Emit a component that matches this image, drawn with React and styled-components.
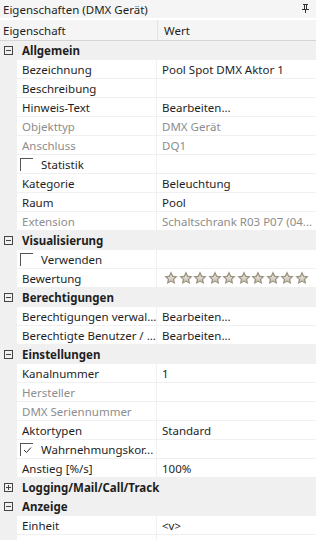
import React from "react";
import styled, { createGlobalStyle } from "styled-components";

const GlobalStyle = createGlobalStyle`
  html, body {
    margin: 0;
    padding: 0;
    background: #f0f0f0;
  }
  body {
    font-family: "Noto Sans", "Open Sans", sans-serif;
    font-size: 11.5px;
    color: #1e1e1e;
  }
`;

const sections = [
  {
    title: "Allgemein",
    open: true,
    rows: [
      { name: "Bezeichnung", value: "Pool Spot DMX Aktor 1" },
      { name: "Beschreibung", value: "" },
      { name: "Hinweis-Text", value: "Bearbeiten..." },
      { name: "Objekttyp", value: "DMX Gerät", disabled: true },
      { name: "Anschluss", value: "DQ1", disabled: true },
      { name: "Statistik", check: false },
      { name: "Kategorie", value: "Beleuchtung" },
      { name: "Raum", value: "Pool" },
      { name: "Extension", value: "Schaltschrank R03 P07 (04...", disabled: true },
    ],
  },
  {
    title: "Visualisierung",
    open: true,
    rows: [
      { name: "Verwenden", check: false },
      { name: "Bewertung", stars: 10 },
    ],
  },
  {
    title: "Berechtigungen",
    open: true,
    rows: [
      { name: "Berechtigungen verwal...", value: "Bearbeiten..." },
      { name: "Berechtigte Benutzer / ...", value: "Bearbeiten..." },
    ],
  },
  {
    title: "Einstellungen",
    open: true,
    rows: [
      { name: "Kanalnummer", value: "1" },
      { name: "Hersteller", value: "", disabled: true },
      { name: "DMX Seriennummer", value: "", disabled: true },
      { name: "Aktortypen", value: "Standard" },
      { name: "Wahrnehmungskor...", check: true },
      { name: "Anstieg [%/s]", value: "100%" },
    ],
  },
  { title: "Logging/Mail/Call/Track", open: false, rows: [] },
  {
    title: "Anzeige",
    open: true,
    rows: [
      { name: "Einheit", value: "<v>" },
      { name: "", value: "" },
    ],
  },
];

const PinIcon = () => (
  <svg width="9" height="9" viewBox="0 0 9 9">
    <g fill="#333">
      <rect x="2" y="0" width="5" height="1" />
      <rect x="3" y="1" width="1" height="4" />
      <rect x="5" y="1" width="1" height="4" />
      <rect x="1" y="5" width="7" height="1" />
      <rect x="4" y="6" width="1" height="3" />
    </g>
  </svg>
);

const Star = ({ id }) => (
  <svg width="14" height="14" viewBox="1 1 22 22">
    <defs>
      <linearGradient id={id} x1="0" y1="0" x2="0" y2="1">
        <stop offset="0" stopColor="#eeeae0" />
        <stop offset="1" stopColor="#c4bfb0" />
      </linearGradient>
    </defs>
    <path
      d="M12 1.5l3.2 6.9 7.3.8-5.5 5 1.6 7.4L12 17.8l-6.6 3.8L7 14.2l-5.5-5 7.3-.8z"
      fill="#9a9381"
    />
    <path
      d="M12 6.6l1.9 3.9 4.2.5-3.1 2.9.8 4.2-3.8-2.1-3.8 2.1.8-4.2-3.1-2.9 4.2-.5z"
      fill={`url(#${id})`}
    />
  </svg>
);

const CheckMark = () => (
  <svg width="9" height="8" viewBox="0 0 9 8">
    <path d="M1 4l2.5 2.5L8 1.5" fill="none" stroke="#333" strokeWidth="1" />
  </svg>
);

export default function App() {
  return (
    <>
      <GlobalStyle />
      <Panel>
        <TitleBar>
          <span>Eigenschaften (DMX Gerät)</span>
          <PinIcon />
        </TitleBar>
        <Header>
          <HeadCell>Eigenschaft</HeadCell>
          <HeadCell $last>Wert</HeadCell>
        </Header>
        {sections.map((s) => (
          <React.Fragment key={s.title}>
            <CategoryRow>
              <Gutter>
                <Toggle>
                  <ToggleBar />
                  {!s.open && <ToggleBar $vertical />}
                </Toggle>
              </Gutter>
              <CategoryLabel>{s.title}</CategoryLabel>
            </CategoryRow>
            {s.rows.map((r, i) => (
              <Row key={s.title + i}>
                <Gutter />
                <NameCell $disabled={r.disabled}>
                  {r.check !== undefined && (
                    <CheckBox>{r.check && <CheckMark />}</CheckBox>
                  )}
                  <CellText>{r.name}</CellText>
                </NameCell>
                <ValueCell $disabled={r.disabled}>
                  {r.stars ? (
                    <Stars>
                      {Array.from({ length: r.stars }).map((_, k) => (
                        <Star key={k} id={`st${k}`} />
                      ))}
                    </Stars>
                  ) : (
                    <CellText>{r.value}</CellText>
                  )}
                </ValueCell>
              </Row>
            ))}
          </React.Fragment>
        ))}
      </Panel>
    </>
  );
}

const Panel = styled.div`
  width: 316px;
  height: 540px;
  overflow: hidden;
  background: #f0f0f0;
  display: flex;
  flex-direction: column;
`;

const TitleBar = styled.div`
  height: 19px;
  flex: none;
  display: flex;
  align-items: center;
  justify-content: space-between;
  padding: 1px 6px 0 3px;
  box-sizing: border-box;
  background: #f5f5f5;
  border-bottom: 1px solid #ffffff;
  color: #1e1e1e;
  svg {
    margin-top: -2px;
  }
`;

const Header = styled.div`
  height: 22px;
  flex: none;
  display: grid;
  grid-template-columns: 157px 1fr;
  background: #f5f5f5;
  border-top: 1px solid #ffffff;
  border-bottom: 1px solid #d5d5d5;
  box-sizing: border-box;
`;

const HeadCell = styled.div`
  display: flex;
  align-items: center;
  padding-left: ${(p) => (p.$last ? "6px" : "3px")};
  border-left: ${(p) => (p.$last ? "1px solid #e3e3e3" : "none")};
  color: #1e1e1e;
`;

const CategoryRow = styled.div`
  height: 19px;
  flex: none;
  display: flex;
  align-items: center;
  background: #f0f0f0;
`;

const Gutter = styled.div`
  width: 17px;
  height: 100%;
  flex: none;
  display: flex;
  align-items: center;
  background: #f0f0f0;
`;

const Toggle = styled.div`
  position: relative;
  width: 9px;
  height: 9px;
  margin-left: 4px;
  box-sizing: border-box;
  border: 1px solid #444;
`;

const ToggleBar = styled.div`
  position: absolute;
  background: #444;
  ${(p) =>
    p.$vertical
      ? "left: 3px; top: 1px; width: 1px; height: 5px;"
      : "left: 1px; top: 3px; width: 5px; height: 1px;"}
`;

const CategoryLabel = styled.div`
  padding-left: 5px;
  font-weight: bold;
  color: #1e1e1e;
`;

const Row = styled.div`
  height: 19px;
  flex: none;
  display: flex;
`;

const NameCell = styled.div`
  width: 140px;
  flex: none;
  display: flex;
  align-items: center;
  box-sizing: border-box;
  padding-left: 5px;
  background: #fff;
  border-bottom: 1px solid #f0f0f0;
  border-right: 1px solid #f0f0f0;
  color: ${(p) => (p.$disabled ? "#8d8d8d" : "#1e1e1e")};
  overflow: hidden;
`;

const ValueCell = styled.div`
  flex: 1;
  display: flex;
  align-items: center;
  box-sizing: border-box;
  padding-left: 5px;
  background: #fff;
  border-bottom: 1px solid #f0f0f0;
  color: ${(p) => (p.$disabled ? "#8d8d8d" : "#1e1e1e")};
  overflow: hidden;
`;

const CellText = styled.span`
  white-space: nowrap;
`;

const CheckBox = styled.div`
  width: 13px;
  height: 13px;
  flex: none;
  box-sizing: border-box;
  margin: 0 8px 0 -2px;
  border-top: 1px solid #555;
  border-left: 1px solid #555;
  display: flex;
  align-items: center;
  justify-content: center;
`;

const Stars = styled.div`
  display: flex;
  gap: 0.5px;
  margin-left: 2px;
`;
